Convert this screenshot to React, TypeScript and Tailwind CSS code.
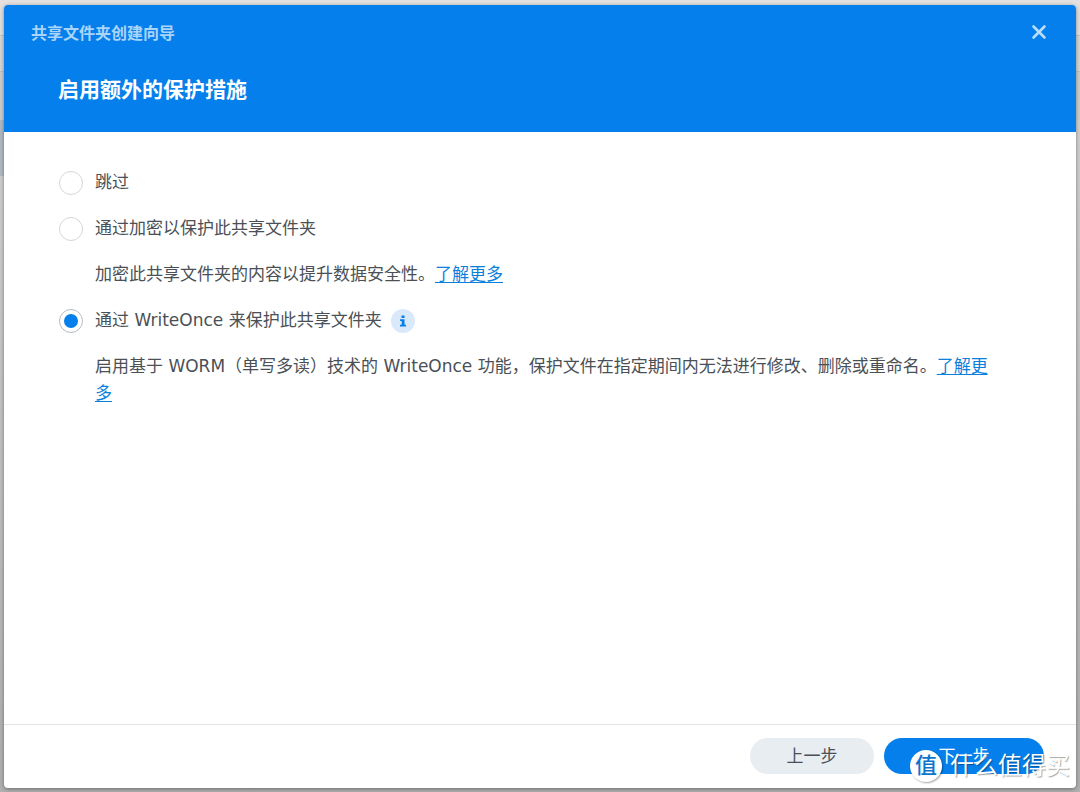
import { useState } from 'react';

const radioClass =
  'relative grid size-6 shrink-0 appearance-none place-items-center rounded-full border border-[#d3d7da] bg-white before:size-[14px] before:rounded-full before:bg-transparent checked:border-[#b4bcc4] checked:before:bg-[#057feb]';

type Protection = 'skip' | 'encrypt' | 'worm';

function LearnMore() {
  return (
    <a href="#learn-more" className="text-[#0a7fdc] underline underline-offset-2">
      了解更多
    </a>
  );
}

function Option(props: {
  id: Protection;
  label: string;
  value: Protection;
  onChange: (v: Protection) => void;
}) {
  return (
    <div className="flex items-center gap-3">
      <input
        type="radio"
        name="protection"
        id={props.id}
        checked={props.value === props.id}
        onChange={() => props.onChange(props.id)}
        className={radioClass}
      />
      <label htmlFor={props.id}>{props.label}</label>
    </div>
  );
}

function Backdrop() {
  return (
    <div aria-hidden="true" className="absolute inset-0 -z-10 flex flex-col bg-linear-to-b from-[#d8d8d8] via-[#c4c4c4] to-[#b0b0b0]">
      <div className="h-9 border-b border-[#c4c4c4] bg-[#e4e0e0]" />
      <div className="h-9 border-b border-[#c0c0c0] bg-[#d6d6d6]" />
      <div className="h-12 bg-[#cccecd]" />
      <div className="h-14 w-1/2 bg-[#b2bac4]" />
    </div>
  );
}

function Watermark() {
  return (
    <div className="pointer-events-none absolute right-[10px] bottom-[10px] flex items-center gap-2 text-white">
      <span className="grid size-8 place-items-center rounded-full bg-white text-[22px] leading-8 font-medium text-[#0b74cf] shadow-[1px_1px_2px_rgba(0,0,0,0.35)]">
        值
      </span>
      <span className="text-[24px] leading-8 [text-shadow:1px_1px_1px_rgba(0,0,0,0.35)]">什么值得买</span>
    </div>
  );
}

export default function App() {
  const [value, setValue] = useState<Protection>('worm');
  return (
    <main className="relative isolate flex min-h-screen flex-col px-1 pt-[5px] pb-1 font-['DejaVu_Sans','Noto_Sans_CJK_SC',sans-serif] text-[17px] leading-[27px] text-[#4a5056]">
      <Backdrop />
      <section
        role="dialog"
        aria-labelledby="wizard-title"
        className="flex flex-1 flex-col overflow-hidden rounded bg-white shadow-[0_1px_4px_rgba(0,0,0,0.4)]"
      >
        <header className="bg-[#057feb] pr-[25px] pb-7 pl-[27px] font-['Noto_Sans_CJK_SC',sans-serif]">
          <div className="flex items-center justify-between pt-[15px]">
            <h1 id="wizard-title" className="text-[16px] leading-6 font-bold text-[#a9d4fb]">
              共享文件夹创建向导
            </h1>
            <button type="button" aria-label="关闭" className="grid size-6 place-items-center text-[#b9defc]">
              <svg viewBox="0 0 24 24" className="size-6" fill="none" stroke="currentColor" strokeWidth="2.6" strokeLinecap="round">
                <path d="M6.5 6.5l11 11M17.5 6.5l-11 11" />
              </svg>
            </button>
          </div>
          <h2 className="mt-7 pl-[27px] text-[21px] leading-8 font-bold text-white">启用额外的保护措施</h2>
        </header>

        <form className="flex flex-1 flex-col gap-[19px] pt-[37px] pr-20 pb-8 pl-[55px]">
          <Option id="skip" label="跳过" value={value} onChange={setValue} />
          <Option id="encrypt" label="通过加密以保护此共享文件夹" value={value} onChange={setValue} />
          <p className="pl-9">
            加密此共享文件夹的内容以提升数据安全性。
            <LearnMore />
          </p>
          <div className="flex items-center gap-[9px]">
            <Option id="worm" label="通过 WriteOnce 来保护此共享文件夹" value={value} onChange={setValue} />
            <button type="button" aria-label="信息" className="grid size-6 place-items-center rounded-full bg-[#d9e9fa] text-[#057feb]">
              <svg viewBox="0 0 24 24" className="size-6" fill="currentColor">
                <path d="M10.5 6.5h3v2.4h-3zM9 10.2h4.5v5.6H15v1.7H9v-1.7h1.7v-3.9H9z" />
              </svg>
            </button>
          </div>
          <p className="pl-9">
            启用基于 WORM（单写多读）技术的 WriteOnce 功能，保护文件在指定期间内无法进行修改、删除或重命名。
            <LearnMore />
          </p>
        </form>

        <footer className="flex justify-end gap-[10px] border-t border-[#e0e4e8] pt-[13px] pr-8 pb-[14px]">
          <button type="button" className="h-9 w-[124px] rounded-full bg-[#e8edf2]">
            上一步
          </button>
          <button type="button" className="h-9 w-40 rounded-full bg-[#057feb] text-white">
            下一步
          </button>
        </footer>
      </section>
      <Watermark />
    </main>
  );
}
